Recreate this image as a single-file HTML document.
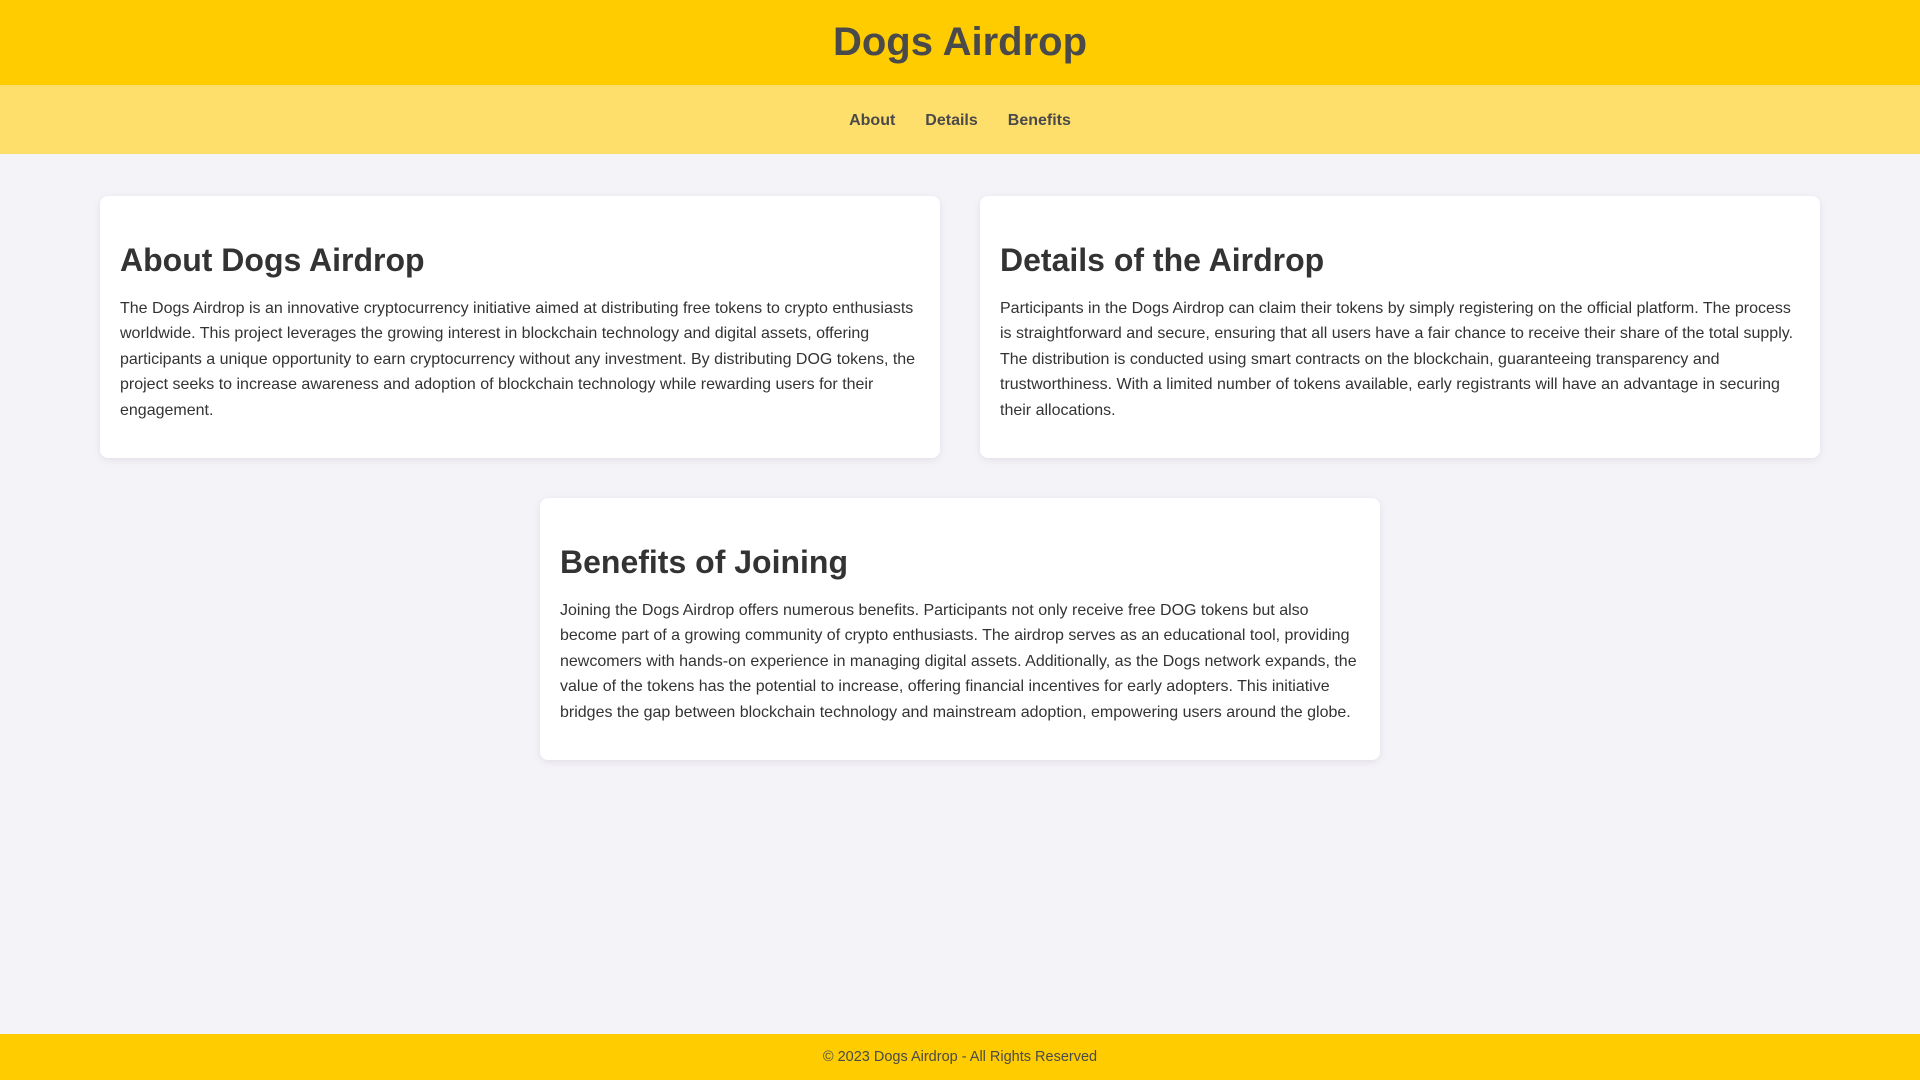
<!DOCTYPE html>
<html><head><meta charset="utf-8"><style>
*{box-sizing:border-box}
body{margin:0;font-family:"Liberation Sans",Arial,sans-serif;background:#f4f3f8;color:#333;width:1920px;height:1080px;position:relative}
header{background:#ffcc00;height:85px;text-align:center}
header h1{margin:0;font-size:40px;line-height:84px;color:#4a4a4a}
nav{background:#ffdf6b;height:69px;text-align:center;line-height:72px}
nav a{color:#4a4a4a;font-weight:bold;text-decoration:none;font-size:16px;margin:0 15px}
main{display:flex;flex-wrap:wrap;justify-content:center;gap:40px;width:1720px;margin:42px auto 0}
.card{width:840px;background:#fff;border-radius:8px;box-shadow:0 2px 8px rgba(0,0,0,.08);padding:20px 20px 16px}
.card h2{font-size:32px;margin:26px 0 17px;color:#333}
.card p{font-size:16px;line-height:25.4px;margin:0 0 19px}
footer{position:absolute;left:0;right:0;bottom:0;height:46px;background:#ffcc00;text-align:center;line-height:46px;font-size:14.5px;color:#4a4a4a}
</style></head><body>
<header><h1>Dogs Airdrop</h1></header>
<nav><a>About</a><a>Details</a><a>Benefits</a></nav>
<main>
<div class="card"><h2>About Dogs Airdrop</h2><p>The Dogs Airdrop is an innovative cryptocurrency initiative aimed at distributing free tokens to crypto enthusiasts worldwide. This project leverages the growing interest in blockchain technology and digital assets, offering participants a unique opportunity to earn cryptocurrency without any investment. By distributing DOG tokens, the project seeks to increase awareness and adoption of blockchain technology while rewarding users for their engagement.</p></div>
<div class="card"><h2>Details of the Airdrop</h2><p>Participants in the Dogs Airdrop can claim their tokens by simply registering on the official platform. The process is straightforward and secure, ensuring that all users have a fair chance to receive their share of the total supply. The distribution is conducted using smart contracts on the blockchain, guaranteeing transparency and trustworthiness. With a limited number of tokens available, early registrants will have an advantage in securing their allocations.</p></div>
<div class="card"><h2>Benefits of Joining</h2><p>Joining the Dogs Airdrop offers numerous benefits. Participants not only receive free DOG tokens but also become part of a growing community of crypto enthusiasts. The airdrop serves as an educational tool, providing newcomers with hands-on experience in managing digital assets. Additionally, as the Dogs network expands, the value of the tokens has the potential to increase, offering financial incentives for early adopters. This initiative bridges the gap between blockchain technology and mainstream adoption, empowering users around the globe.</p></div>
</main>
<footer>© 2023 Dogs Airdrop - All Rights Reserved</footer>
</body></html>
